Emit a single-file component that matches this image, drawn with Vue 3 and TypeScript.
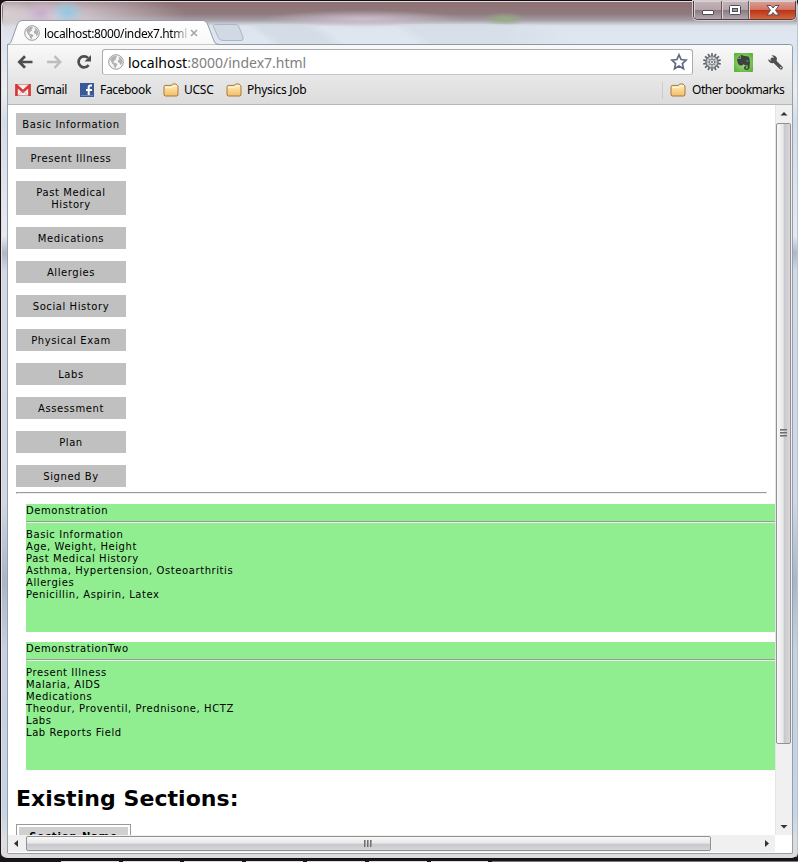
<script setup lang="ts">
interface Note {
  title: string
  lines: string[]
}

const sections: string[] = [
  'Basic Information', 'Present Illness', 'Past Medical History', 'Medications', 'Allergies',
  'Social History', 'Physical Exam', 'Labs', 'Assessment', 'Plan', 'Signed By',
]

const notes: Note[] = [
  {
    title: 'Demonstration',
    lines: ['Basic Information', 'Age, Weight, Height', 'Past Medical History', 'Asthma, Hypertension, Osteoarthritis', 'Allergies', 'Penicillin, Aspirin, Latex'],
  },
  {
    title: 'DemonstrationTwo',
    lines: ['Present Illness', 'Malaria, AIDS', 'Medications', 'Theodur, Proventil, Prednisone, HCTZ', 'Labs', 'Lab Reports Field'],
  },
]

const gearTeeth: number[] = Array.from({ length: 14 }, (_, i) => (i * 360) / 14)
</script>

<template>
  <div class="desktop">
    <svg width="0" height="0" class="defs">
      <defs>
        <linearGradient id="folderFill" x1="0" y1="0" x2="0" y2="1">
          <stop offset="0" stop-color="#fff0c0" />
          <stop offset="1" stop-color="#f3bd68" />
        </linearGradient>
        <linearGradient id="tabFill" x1="0" y1="0" x2="0" y2="1">
          <stop offset="0" stop-color="#ffffff" />
          <stop offset="1" stop-color="#f8f8f8" />
        </linearGradient>
        <radialGradient id="evernoteFill" cx="0.5" cy="0.5" r="0.7">
          <stop offset="0" stop-color="#b4dc96" />
          <stop offset="1" stop-color="#4eae2d" />
        </radialGradient>
        <symbol id="globe" viewBox="0 0 16 16">
          <circle cx="8" cy="8" r="7.3" fill="#f7f7f7" stroke="#999" stroke-width="1" />
          <path d="M2 5.2 4.4 2.4 8 1.6 9 3 7.5 4.2 8.3 5.4 6.4 6.5 5.2 8.2 6.8 9 8.5 9.3 9.5 10.7 8.2 12.2 7.6 14.2 6 13 5.6 10.8 4 9.5 3.2 7.5ZM10.2 2.6 12.4 3.6 14.2 6.2 14.2 9 12.6 11.6 11.8 9.2 10 8.2 9.8 6.2 11.4 5.2Z" fill="#b2b2b2" />
        </symbol>
        <symbol id="folder" viewBox="0 0 16 14">
          <path d="M1 12V3.3L2 2.4H8.5L9.5 1H13L14 2.2 15 3V12L14 13H2Z" fill="url(#folderFill)" stroke="#a87938" />
          <path d="M2 4.5H9L10 3H14" fill="none" stroke="#fff4d4" />
        </symbol>
      </defs>
    </svg>

    <div class="window">
      <div class="titlebar">
        <svg class="tab" width="240" height="25" viewBox="0 0 240 25">
          <path d="M0 24.500H1Q3 24 4 22L10.500 4Q12 .500 15 .500H196Q199 .500 200.500 4L207 21Q208 24.500 212 24.500H240" fill="url(#tabFill)" stroke="#929ba3" />
          <path d="M206 5.500Q207 4.500 209 4.500H229Q231 4.500 232 7L236 17Q237 20.500 234 20.500H216Q213 20.500 211.500 18Z" fill="#d0d9e4" stroke="#abb7c4" />
        </svg>
        <div class="tab-label">
          <svg class="globe"><use href="#globe" /></svg>
          <span class="tab-title">localhost:8000/index7.html</span>
          <svg class="tab-close" viewBox="0 0 8 8"><path d="M1 1 7 7M7 1 1 7" stroke="#a3a3a3" stroke-width="1.5" /></svg>
        </div>
        <div class="controls">
          <span class="control"><svg width="27" height="18"><rect x="8.500" y="9.500" width="11" height="4" rx=".5" fill="#fff" stroke="#4c4c5c" /></svg></span>
          <span class="control"><svg width="26" height="18"><rect x="7.500" y="4.500" width="11" height="9" rx="1" fill="#fff" stroke="#4c4c5c" /><rect x="10.500" y="7.500" width="5" height="3" fill="#a39aa0" stroke="#4c4c5c" /></svg></span>
          <span class="control close"><svg width="46" height="18"><path d="M18 4.500H22L24 7 26 4.500H30L26.500 9.300 30 14H26L24 11.500 22 14H18L21.500 9.300Z" fill="#fff" stroke="#5c4c58" /></svg></span>
        </div>
      </div>

      <div class="client">
        <div class="toolbar">
          <svg class="nav" width="84" height="20" viewBox="0 0 84 20">
            <path d="M2.500 10H15.500M8 4.200 2.300 10 8 15.800" fill="none" stroke="#4d4d4d" stroke-width="2.700" />
            <path d="M30 10H43M37.500 4.200 43.200 10 37.500 15.800" fill="none" stroke="#bdbdbd" stroke-width="2.400" />
            <path d="M71 5.900A5.500 5.500 0 1 0 71.600 13" fill="none" stroke="#4d4d4d" stroke-width="2.700" />
            <path d="M74 3V9.500H67.500Z" fill="#4d4d4d" />
          </svg>
          <div class="omnibox">
            <svg class="globe"><use href="#globe" /></svg>
            <span class="url"><b>localhost</b>:8000/index7.html</span>
            <svg class="star" width="18" height="18" viewBox="0 0 18 18"><path d="M9 1.800 11.100 6.500 16.200 7.100 12.400 10.600 13.500 15.700 9 13.100 4.500 15.700 5.600 10.600 1.800 7.100 6.900 6.500Z" fill="#fff" stroke="#5c6b84" stroke-width="1.700" /></svg>
          </div>
          <svg class="gear" width="20" height="20" viewBox="-10 -10 20 20">
            <path v-for="angle in gearTeeth" :key="angle" d="M-1-5.500-.7-9H.7L1-5.500Z" :transform="`rotate(${angle})`" fill="#60666e" />
            <circle r="6" fill="#ccd0d5" stroke="#70767e" stroke-width="1.200" />
            <path d="M0-5V5M-5 0H5M-3.500-3.500 3.500 3.500M3.500-3.500-3.500 3.500" stroke="#858a92" />
            <circle r="2.600" fill="#eeeeef" stroke="#777c84" />
            <circle r="1" fill="#62676e" />
          </svg>
          <svg class="evernote" width="19" height="19" viewBox="0 0 19 19">
            <rect width="19" height="19" rx="1" fill="url(#evernoteFill)" />
            <path d="M3 6 6.300 2.500Q8 1.500 9.500 2.800L13 3.300Q15 3.400 15.500 5.500 16.600 10.500 15.500 15 15 17 12.500 17 10 17 10 14.500 10 12.800 12.500 12.800V14H11.800V15.400H13.600V12.300Q10.500 12.800 9.500 11.300 8.500 13 6 12.500 3.500 11.500 3 6Z" fill="#3a443b" />
            <path d="M3.500 5.500H6.500V2.700M12.300 7.800Q13.800 7.200 14.200 8.700" fill="none" stroke="#91aa85" stroke-width=".8" />
          </svg>
          <svg class="wrench" width="17" height="17" viewBox="0 0 17 17">
            <path d="M5.300 5.300 14 13.800" stroke="#505050" stroke-width="3.600" stroke-linecap="round" />
            <path d="M4.500 1.200Q8.500.8 10 4.200L9.300 8.300 5.500 9.200Q2 9.200 1 5.300L4 6.800 6.500 5.400V3Z" fill="#505050" />
            <circle cx="13.800" cy="13.600" r=".8" fill="#ddd" />
          </svg>
        </div>

        <div class="bookmarks">
          <svg class="mail" width="16" height="12" viewBox="0 0 16 12"><rect x=".5" y=".5" width="15" height="11" fill="#f5eeee" stroke="#d99a9a" /><path d="M1.500 12V1.500L8 7.500 14.500 1.500V12" fill="none" stroke="#d93636" stroke-width="2.600" /><path d="M3.500 11 7 7.500M12.500 11 9 7.500" stroke="#ddb5b5" /></svg>
          <span class="mark gmail">Gmail</span>
          <svg class="fb" width="14" height="14" viewBox="0 0 14 14"><rect width="14" height="14" fill="#3b5998" /><path d="M12 2.500H10.500Q8.700 2.500 8.700 4.500V12.500M6 7H12" fill="none" stroke="#fff" stroke-width="2" /><path d="M1 12.500H13" stroke="#7188b8" /></svg>
          <span class="mark facebook">Facebook</span>
          <svg class="folder"><use href="#folder" /></svg>
          <span class="mark ucsc">UCSC</span>
          <svg class="folder"><use href="#folder" /></svg>
          <span class="mark physics">Physics Job</span>
          <span class="divider"></span>
          <svg class="folder"><use href="#folder" /></svg>
          <span class="mark other">Other bookmarks</span>
        </div>

        <div class="viewport">
          <main class="page">
            <nav class="sections">
              <div v-for="name in sections" :key="name" class="section">{{ name }}</div>
            </nav>
            <hr class="page-rule">
            <article v-for="note in notes" :key="note.title" class="note">
              <div>{{ note.title }}</div>
              <hr>
              <div v-for="line in note.lines" :key="line">{{ line }}</div>
            </article>
            <h1>Existing Sections:</h1>
            <table><thead><tr><th>Section Name</th></tr></thead></table>
          </main>

          <div class="vbar">
            <svg class="arrow-up" width="15" height="17"><path d="M4.500 10.500 8 7 11.500 10.500Z" fill="#333" /></svg>
            <div class="vthumb"><i></i><i></i><i></i></div>
            <svg class="arrow-down" width="15" height="17"><path d="M4.500 7 8 10.500 11.500 7Z" fill="#333" /></svg>
          </div>
          <div class="hbar">
            <svg width="18" height="16"><path d="M10 4 6 7.500 10 11Z" fill="#333" /></svg>
            <div class="hthumb"><i></i><i></i><i></i></div>
            <svg class="arrow-right" width="18" height="16"><path d="M8 4 12 7.500 8 11Z" fill="#333" /></svg>
          </div>
        </div>
      </div>
    </div>
    <div class="taskline"><i></i><i></i><i></i><i></i><i></i><i></i><i></i><i class="rest"></i></div>
  </div>
</template>

<style>
body { margin: 0; overflow: hidden; }
</style>

<style scoped>
* { box-sizing: border-box; }
.desktop { width: 798px; height: 862px; background: #18151a; overflow: hidden; font-family: "Noto Sans", sans-serif; color: #000; }
.defs { display: block; }
.window {
  height: 859px; margin: 0 0 0 1px; padding: 0 4px 5px 6px; border: 1px solid #100c10; border-left-width: 0; border-right-color: #b5c6d8; border-radius: 6px;
  background: linear-gradient(180deg, #917174 0, #89777b 14px, #a7a0a6 19px, #dfe7f1 25px, #dce5ef 48px, #eee 90px, #d4dce8 120px, #e7e9f0 235px, #aeb6c7 252px, #d3d8e5 270px, #d1d7e4 500px, #aab6c8 580px, #c8d1df 650px, #c6d4e4 810px, #dedede 840px, #ded9dd 100%);
  box-shadow: inset 1px 1px #e8dfe2;
}
.titlebar {
  position: relative; height: 42px; margin: 1px -3px 0 -4px; display: flex;
  background: radial-gradient(ellipse 26px 16px at 4px 12px, #d8cfd0 0, transparent), radial-gradient(ellipse 18px 12px at 38px 11px, #c6aecb, transparent), radial-gradient(ellipse 18px 12px at 64px 10px, #91c8e3, transparent), radial-gradient(ellipse 140px 24px at 45px 13px, #ded6df, transparent), radial-gradient(ellipse 100px 9px at 360px 17px, #cbbecb, transparent), radial-gradient(ellipse 22px 7px at 502px 17px, #94ac7f, transparent), linear-gradient(#8e7074 0, #8f7b7e 12px, #a59ca4 18px, #dde4ed 24px, #dfe7f2 42px);
}
.titlebar::after { content: ""; position: absolute; z-index: 0; left: 240px; right: 0; top: 22px; height: 20px; background: linear-gradient(35deg, transparent 0 5%, #d0d8e2 7% 15%, transparent 18% 30%, #d3dbe5 33% 46%, transparent 58%); opacity: .7; }
.tab { position: absolute; left: 4px; top: 18px; overflow: visible; z-index: 1; }
.tab-label { position: relative; z-index: 2; display: flex; align-items: center; height: 20px; margin: 21px 0 0 21px; }
.globe { width: 16px; height: 16px; flex: none; }
.tab-title { width: 143px; margin-left: 4px; overflow: hidden; white-space: nowrap; font-size: 12px; letter-spacing: -.38px; -webkit-mask-image: linear-gradient(90deg, #000 128px, transparent 146px); mask-image: linear-gradient(90deg, #000 128px, transparent 146px); }
.tab-close { width: 8px; height: 8px; margin-left: 3px; }
.controls { display: flex; height: 19px; margin: -1px 0 0 auto; border: 1px solid #494049; border-top: 0; border-radius: 0 0 5px 5px; overflow: hidden; box-shadow: 0 0 0 1px #d5cbd1; z-index: 2; }
.control { height: 18px; background: linear-gradient(#c4b5b8, #b4a4a8 48%, #89797e 50%, #b3a6ad); border-right: 1px solid #655a61; box-shadow: inset 1px 1px #ded1d4; }
.control svg { display: block; }
.close { border: 0; background: linear-gradient(#dba195, #d07767 47%, #b93118 50%, #d46737); }
.client { height: 810px; border: 1px solid #949fab; border-top-color: #8f989f; border-radius: 0 4px 2px 2px; background: #fff; overflow: hidden; }
.toolbar { display: flex; align-items: center; height: 34px; padding: 0 7px 0 9px; background: linear-gradient(#f9f9f9, #e6e6e6); }
.nav { flex: none; }
.omnibox { display: flex; align-items: center; flex: none; width: 591px; height: 26px; margin-left: 1px; padding: 0 4px 0 5px; border: 1px solid #a9acb0; border-bottom-color: #c4c6c9; border-radius: 3px; background: #fff; }
.url { margin-left: 4px; color: #808080; font-size: 14px; white-space: nowrap; }
.url b { color: #000; font-weight: 400; }
.star { margin-left: auto; }
.gear { flex: none; margin-left: 9px; }
.evernote { flex: none; margin-left: 12px; }
.wrench { flex: none; margin-left: 14px; }
.bookmarks { display: flex; align-items: center; height: 26px; padding: 0 0 3px 7px; border-bottom: 1px solid #b5b6bb; background: linear-gradient(#e6e6e6, #dcdcdc); }
.mark { font-size: 12px; line-height: 16px; letter-spacing: -.25px; white-space: nowrap; }
.gmail { width: 44px; margin-left: 5px; letter-spacing: -.4px; }
.fb { flex: none; }
.facebook { width: 63px; margin-left: 6px; letter-spacing: -.35px; }
.folder { width: 16px; height: 14px; flex: none; }
.ucsc { width: 42px; margin-left: 5px; }
.physics { margin-left: 5px; }
.divider { width: 1px; height: 17px; margin-left: auto; margin-right: 7px; background: #c9cdd3; }
.other { width: 97px; margin: 0 3px 0 6px; letter-spacing: -.47px; }
.viewport { display: grid; grid-template: 730px 17px / 767px 17px; height: 748px; }
.page { padding: 8px 8px 0 8px; overflow: hidden; font-family: "DejaVu Sans", Verdana, sans-serif; font-size: 10px; line-height: 12px; letter-spacing: .58px; background: #fff; }
.sections { display: flex; flex-direction: column; gap: 12px; }
.section { width: 110px; padding: 6px 3px 4px; background: #c0c0c0; text-align: center; }
.page hr { height: 2px; margin: 4px 0 6px; border: 1px solid; border-color: #9a9a9a #eee #eee #9a9a9a; }
.page > .page-rule { width: 751px; margin: 5px 0 10px; }
.note { width: 751px; height: 128px; margin: 0 0 10px 10px; padding-top: 1px; background: #90ee90; }
.page h1 { margin: 14px 0 11px; font-size: 22px; line-height: 29px; letter-spacing: .06px; }
table { width: 115px; border: 1px solid #999; border-spacing: 2px; }
th { height: 17px; padding: 2px 0 0; background: #d0d0d0; text-align: center; font-size: 10px; line-height: 12px; letter-spacing: .9px; white-space: nowrap; }
.vbar { display: flex; flex-direction: column; height: 730px; border-left: 1px solid #e5e5e5; background: #f0f0f0; }
.vbar svg, .hbar svg { flex: none; }
.vthumb { display: flex; flex-direction: column; align-items: center; justify-content: center; gap: 1px; width: 15px; height: 621px; margin-top: 1px; padding-bottom: 2px; border: 1px solid #919191; border-radius: 2px; background: linear-gradient(90deg, #f8f8f8, #e7e7e8 48%, #c8c8cc 55%, #d8d8dc); }
.vthumb i { width: 7px; height: 2px; background: linear-gradient(#555, #bbb); }
.arrow-down { margin-top: auto; }
.hbar { display: flex; height: 17px; width: 767px; padding-top: 1px; background: #f0f0f0; }
.hthumb { display: flex; align-items: center; justify-content: center; gap: 1px; width: 685px; height: 15px; padding-right: 2px; border: 1px solid #919191; border-radius: 2px; background: linear-gradient(#f8f8f8, #e7e7e8 48%, #c8c8cc 55%, #d6d6d9); }
.hthumb i { width: 2px; height: 7px; background: linear-gradient(90deg, #555, #bbb); }
.arrow-right { margin-left: auto; }
.taskline { display: flex; gap: 4px; height: 3px; padding: 2px 0 0 61px; }
.taskline i { flex: none; width: 57.6px; height: 1px; background: #d9d9d9; }
.taskline .rest { width: 308px; background: #777; }
</style>
